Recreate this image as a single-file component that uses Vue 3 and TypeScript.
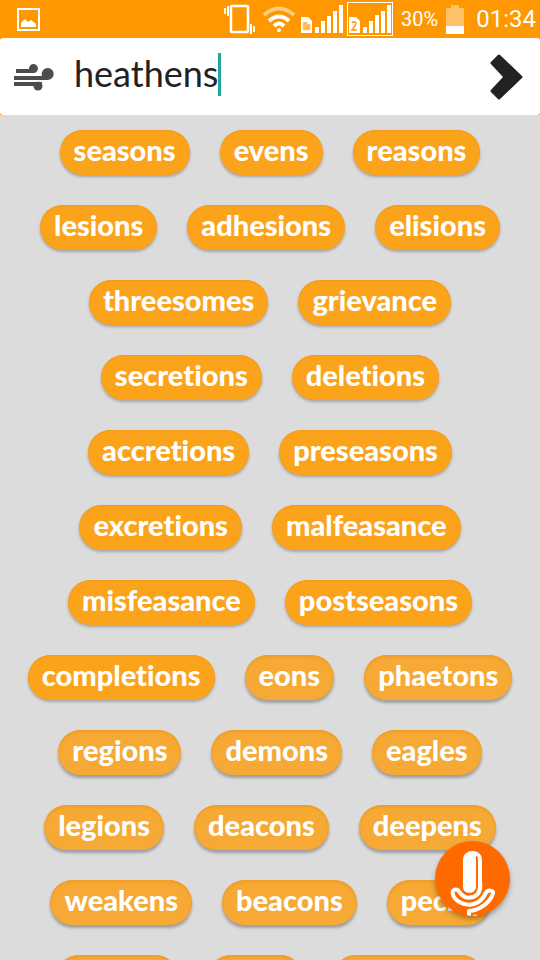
<script setup lang="ts">
import { ref } from 'vue'

interface Row {
  words: string[]
  soft?: number
}

const query = ref('heathens')

// `soft` is the index from which the words of a row are weaker rhymes
const rows: Row[] = [
  { words: ['seasons', 'evens', 'reasons'] },
  { words: ['lesions', 'adhesions', 'elisions'] },
  { words: ['threesomes', 'grievance'] },
  { words: ['secretions', 'deletions'] },
  { words: ['accretions', 'preseasons'] },
  { words: ['excretions', 'malfeasance'] },
  { words: ['misfeasance', 'postseasons'] },
  { words: ['completions', 'eons', 'phaetons'], soft: 1 },
  { words: ['regions', 'demons', 'eagles'], soft: 0 },
  { words: ['legions', 'deacons', 'deepens'], soft: 0 },
  { words: ['weakens', 'beacons', 'pecks'], soft: 0 },
  { words: ['lessens', 'leans', 'sweetens'], soft: 0 },
]

const isSoft = (row: Row, index: number): boolean =>
  row.soft !== undefined && index >= row.soft
</script>

<template>
  <div class="screen">
    <header class="status">
      <svg class="picture" width="23" height="23" viewBox="0 0 23 23" aria-hidden="true">
        <rect x="1" y="1" width="21" height="21" fill="none" stroke="#fff" stroke-width="2" />
        <path d="M4 19V15L8 11L11 14L14 12L19 16V19Z" fill="#fff" />
      </svg>
      <div class="indicators">
        <svg width="34" height="30" viewBox="0 0 34 30" aria-hidden="true">
          <rect x="8" y="2" width="17" height="26" rx="1" fill="none" stroke="#fff" stroke-width="2.5" />
          <path d="M2 4V10M5 2V12M28 20V30M31 22V28" stroke="#fff" stroke-width="2" />
        </svg>
        <svg width="36" height="28" viewBox="0 0 36 28" fill="none" stroke-width="4" aria-hidden="true">
          <path d="M3 10Q18 -3 33 10" stroke="#ffcd80" />
          <path d="M8 16Q18 7 28 16M13 21Q18 16 23 21" stroke="#fff" />
          <circle cx="18" cy="25" r="2" fill="#fff" />
        </svg>
        <svg width="42" height="34" viewBox="0 0 42 34" fill="#fff" aria-hidden="true">
          <path d="M0 15H7L11 19V31H0ZM14 25h4v6h-4ZM20 19h4v12h-4ZM26 14h4v17h-4ZM32 9h4v22h-4ZM38 3h4v28h-4Z" />
          <path d="M2 20h4v2h3v6H2ZM4 22v4M6 22v4" fill="#ffad33" stroke="#ffd699" stroke-width="1" />
        </svg>
        <svg width="46" height="34" viewBox="0 0 46 34" fill="#fff" aria-hidden="true">
          <rect x="0.5" y="0.5" width="45" height="33" fill="none" stroke="#fff" />
          <path d="M2 15H9L13 19V31H2ZM16 25h4v6h-4ZM22 19h4v12h-4ZM28 13h4v18h-4ZM34 9h4v22h-4ZM40 3h4v28h-4Z" />
          <path d="M5 21Q6 19 8 20Q10 21 8 24L5 28H10" fill="none" stroke="#ff9800" stroke-width="1.5" />
        </svg>
        <span class="percent">30%</span>
        <svg width="18" height="29" viewBox="0 0 18 29" aria-hidden="true">
          <path d="M5 0h8v3h5v18H0V3h5Z" fill="#ffc166" />
          <path d="M0 21h18v8H0Z" fill="#fff" />
        </svg>
        <time class="clock">01:34</time>
      </div>
    </header>

    <div class="search-wrap">
      <form class="search" @submit.prevent>
        <svg width="40" height="28" viewBox="0 0 40 28" fill="#4d4d4d" aria-hidden="true">
          <path d="M2 6H15A4.500 4.500 0 1 1 20 10H2Z" />
          <path d="M0 13H28A6 6 0 1 1 34 17H0Z" />
          <path d="M0 19H28V23H20H0Z" />
          <circle cx="24" cy="23" r="4.500" />
          <path d="M0 18H40" stroke="#fff" stroke-width="1" />
        </svg>
        <input v-model="query" class="query" type="text" aria-label="Word" spellcheck="false" />
        <button class="go" type="submit" aria-label="Search">
          <svg width="33" height="46" viewBox="0 0 33 46" aria-hidden="true">
            <path d="M9 2L31 23L9 44L2 37L15 23L2 9Z" fill="#222" stroke="#222" stroke-width="3" stroke-linejoin="round" />
          </svg>
        </button>
      </form>
    </div>

    <main class="results">
      <div v-for="(row, r) in rows" :key="r" class="row">
        <button
          v-for="(word, i) in row.words"
          :key="word"
          type="button"
          class="pill"
          :class="{ soft: isSoft(row, i) }"
          @click="query = word"
        >{{ word }}</button>
      </div>
    </main>

    <button class="mic" type="button" aria-label="Voice input">
      <svg width="75" height="75" viewBox="105 63 225 225" fill="none" stroke="#fff" stroke-width="12" stroke-linejoin="round" aria-hidden="true">
        <path d="M189 200V120C189 84 246 84 246 120V200C246 212 230 218 208 218C196 218 189 212 189 200Z" fill="#fff" stroke="none" />
        <path d="M228 110Q231 112 231 118V198C231 216 219 223 206 223C194 223 188 217 184 208" stroke="#ff6a00" stroke-width="6" />
        <path d="M241 190V198C241 225 222 233 205 233C188 233 182 222 176 213C170 205 157 208 158 219C161 240 184 254 207 254C235 254 250 235 258 218C264 208 281 211 279 220C270 248 240 270 207 273V289M226 289V284" />
      </svg>
    </button>
  </div>
</template>

<style>
body {
  margin: 0;
}
</style>

<style scoped>
.screen {
  display: flex;
  flex-direction: column;
  height: 100vh;
  overflow: hidden;
  background: #dcdcdc;
  font-family: Lato, "Liberation Sans", sans-serif;
  font-variant-ligatures: none;
}

.status {
  display: flex;
  align-items: center;
  justify-content: space-between;
  flex: none;
  box-sizing: border-box;
  height: 38px;
  padding: 0 4px 0 17px;
  background: #ff9800;
  color: #fff;
  font-family: Roboto, sans-serif;
}

.indicators {
  display: flex;
  align-items: center;
  gap: 4px;
}

.percent {
  margin: 0 4px;
  font-size: 20px;
}

.clock {
  margin-left: 8px;
  font-size: 24px;
}

.search-wrap {
  flex: none;
  background: #ff9800;
}

.search {
  display: flex;
  align-items: center;
  box-sizing: border-box;
  height: 77px;
  padding: 0 17px 0 14px;
  border-radius: 3px;
  background: #fff;
}

.query {
  field-sizing: content;
  box-sizing: border-box;
  max-width: 70%;
  height: 43px;
  margin: 0 auto 4px 20px;
  padding: 0 0 4px;
  border: 0;
  border-right: 3px solid #26a69a;
  outline: 0;
  background: none;
  color: #222;
  font-family: inherit;
  font-size: 36px;
  line-height: 39px;
}

.go {
  display: flex;
  padding: 0;
  border: 0;
  background: none;
}

.results {
  display: flex;
  flex-direction: column;
  gap: 30px;
  padding-top: 15px;
}

.row {
  display: flex;
  justify-content: center;
  gap: 30px;
}

.pill {
  flex: none;
  height: 45px;
  padding: 0 14px 6px;
  border: 0;
  border-radius: 23px;
  background: #fca31c;
  box-shadow: 0 2px 3px rgba(0, 0, 0, 0.25), inset 0 1px 2px #f29a18;
  color: #fff;
  font-family: inherit;
  font-size: 29px;
  font-weight: 900;
  font-variant-ligatures: none;
  line-height: 39px;
}

.pill.soft {
  background: #f6a935;
  box-shadow: 0 3px 3px rgba(0, 0, 0, 0.28), inset 0 2px 3px #ee9c27;
}

.mic {
  position: absolute;
  right: 30px;
  bottom: 44px;
  display: flex;
  padding: 0;
  border: 0;
  border-radius: 50%;
  background: #ff6a00;
  box-shadow: 0 3px 5px rgba(0, 0, 0, 0.3);
  overflow: hidden;
}
</style>
